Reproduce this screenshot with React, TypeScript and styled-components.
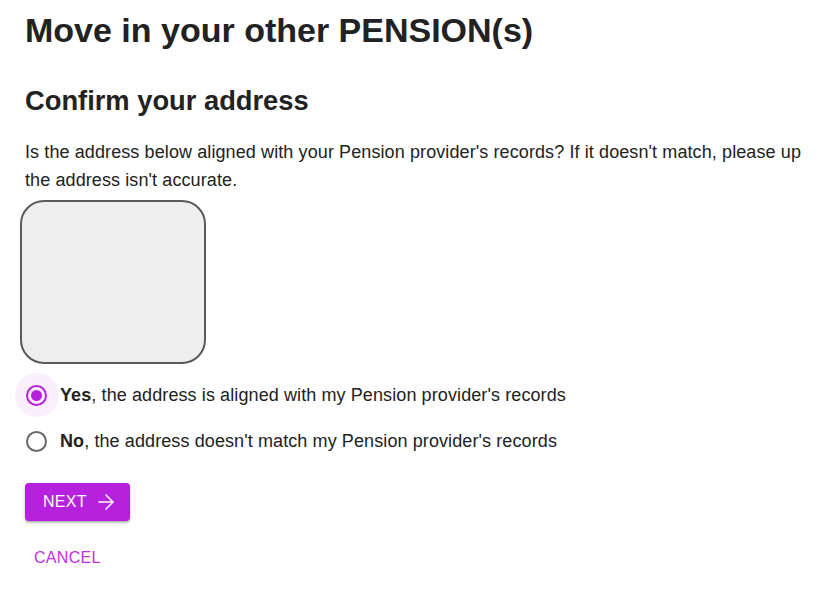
import React, { useState } from 'react'
import styled, { createGlobalStyle } from 'styled-components'
import { ArrowRight } from 'lucide-react'

const PURPLE = '#b621dd'

const GlobalStyle = createGlobalStyle`
  html, body {
    margin: 0;
    padding: 0;
    background: #fff;
  }
  body {
    font-family: "Liberation Sans", Arial, sans-serif;
    color: #222;
  }
`

type Choice = 'yes' | 'no'

const App = () => {
  const [choice, setChoice] = useState<Choice>('yes')

  return (
    <Page>
      <GlobalStyle />
      <Title>Move in your other PENSION(s)</Title>
      <Subtitle>Confirm your address</Subtitle>
      <Intro>
        Is the address below aligned with your Pension provider's records? If it doesn't match, please up the address isn't accurate.
      </Intro>
      <AddressBox />
      <RadioGroup role='radiogroup'>
        <RadioRow onClick={() => setChoice('yes')}>
          <RadioHit $checked={choice === 'yes'}>
            <RadioCircle $checked={choice === 'yes'} />
          </RadioHit>
          <RadioLabel><b>Yes</b>, the address is aligned with my Pension provider's records</RadioLabel>
        </RadioRow>
        <RadioRow onClick={() => setChoice('no')}>
          <RadioHit $checked={choice === 'no'}>
            <RadioCircle $checked={choice === 'no'} />
          </RadioHit>
          <RadioLabel><b>No</b>, the address doesn't match my Pension provider's records</RadioLabel>
        </RadioRow>
      </RadioGroup>
      <Actions>
        <NextButton type='button'>
          Next
          <ArrowRight size={24} strokeWidth={1.5} />
        </NextButton>
        <CancelButton type='button'>Cancel</CancelButton>
      </Actions>
    </Page>
  )
}

const Page = styled.main`
  padding: 9px 25px 0;
  width: 838px;
  height: 602px;
  box-sizing: border-box;
  overflow: hidden;
`

const Title = styled.h1`
  margin: 0;
  font-size: 34px;
  line-height: 42px;
  font-weight: 700;
  color: #222;
`

const Subtitle = styled.h2`
  margin: 34px 0 0;
  font-size: 27.3px;
  line-height: 32px;
  font-weight: 700;
  color: #222;
`

const Intro = styled.p`
  margin: 21px 0 0;
  font-size: 18px;
  line-height: 28px;
  letter-spacing: 0.1px;
  color: #222;
`

const AddressBox = styled.div`
  margin: 6px 0 0 -5px;
  width: 186px;
  height: 164px;
  box-sizing: border-box;
  border: 2px solid #5a5a5a;
  border-radius: 24px;
  background: #eeeeee;
`

const RadioGroup = styled.div`
  margin-top: 8px;
  display: flex;
  flex-direction: column;
`

const RadioRow = styled.label`
  display: flex;
  align-items: center;
  height: 46px;
  cursor: pointer;
`

const RadioHit = styled.span<{ $checked: boolean }>`
  width: 44px;
  height: 44px;
  margin-left: -10px;
  margin-right: 1px;
  border-radius: 50%;
  display: flex;
  align-items: center;
  justify-content: center;
  background: ${p => (p.$checked ? '#faf0fd' : 'transparent')};
`

const RadioCircle = styled.span<{ $checked: boolean }>`
  width: 21px;
  height: 21px;
  box-sizing: border-box;
  border-radius: 50%;
  border: 2px solid ${p => (p.$checked ? PURPLE : '#666')};
  display: flex;
  align-items: center;
  justify-content: center;
  margin-left: -2px;

  &::after {
    content: '';
    width: 11px;
    height: 11px;
    border-radius: 50%;
    background: ${PURPLE};
    display: ${p => (p.$checked ? 'block' : 'none')};
  }
`

const RadioLabel = styled.span`
  font-size: 18px;
  letter-spacing: 0.1px;
  color: #222;

  b {
    font-weight: 700;
  }
`

const Actions = styled.div`
  margin-top: 19px;
  display: flex;
  flex-direction: column;
  align-items: flex-start;
  gap: 19px;
`

const NextButton = styled.button`
  display: inline-flex;
  align-items: center;
  gap: 7px;
  height: 38px;
  width: 105px;
  padding: 0 0 0 18px;
  box-sizing: border-box;
  border: none;
  border-radius: 4px;
  background: ${PURPLE};
  color: #fff;
  font-family: "Liberation Sans", Arial, sans-serif;
  font-size: 16px;
  text-transform: uppercase;
  letter-spacing: 0.3px;
  cursor: pointer;
  box-shadow: 0 2px 3px rgba(0, 0, 0, 0.25), 0 1px 1px rgba(0, 0, 0, 0.1);
`

const CancelButton = styled.button`
  height: 36px;
  padding: 0 9px;
  border: none;
  background: transparent;
  color: #c02fe2;
  font-family: "Liberation Sans", Arial, sans-serif;
  font-size: 16px;
  text-transform: uppercase;
  letter-spacing: 0.3px;
  cursor: pointer;
`

export default App
